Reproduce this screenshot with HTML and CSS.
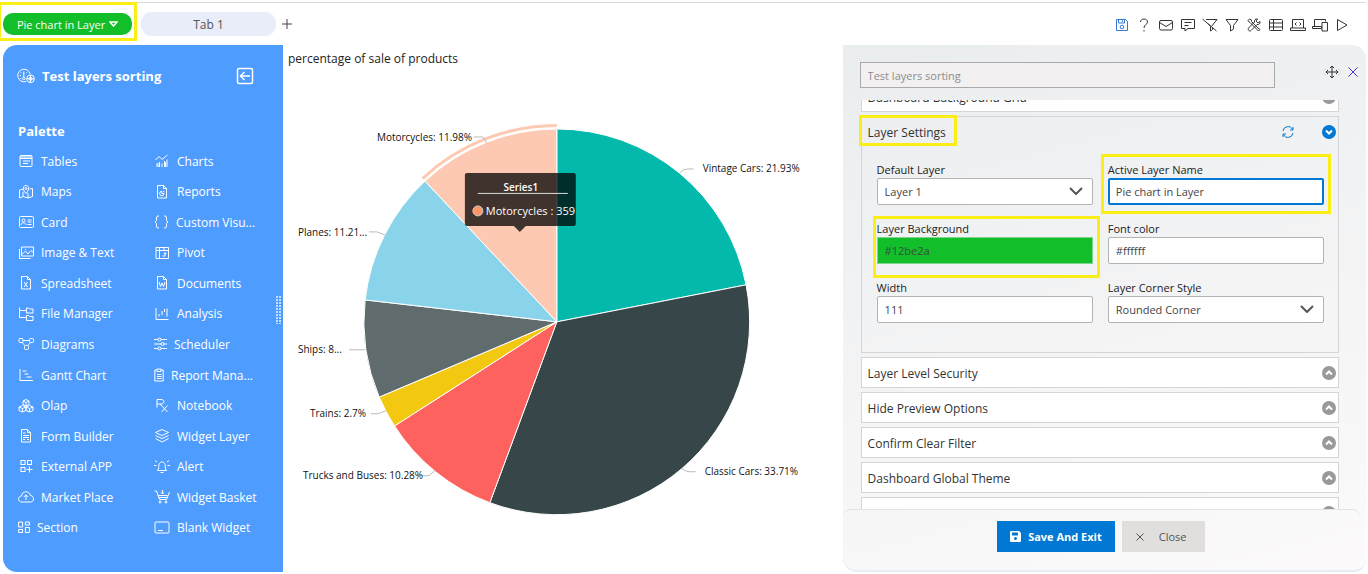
FILE: index.html
```html
<!DOCTYPE html>
<html lang="en">
<head>
<meta charset="utf-8">
<title>Test layers sorting</title>
<link rel="stylesheet" href="styles.css">
</head>
<body>
<header class="topbar">
  <nav class="tabs">
    <div class="tab-wrap">
      <button class="tab tab-active">Pie chart in Layer
        <svg width="9" height="6" viewBox="0 0 9 6"><path d="M1 1h7L4.500 5z"/></svg>
      </button>
      <span class="mark mark-tab"></span>
    </div>
    <button class="tab tab-plain">Tab 1</button>
    <button class="tab-add" aria-label="Add tab"><svg width="12" height="12" viewBox="0 0 12 12"><path d="M6 1v10M1 6h10"/></svg></button>
  </nav>
  <div class="tools">
    <button class="tool tool-save" aria-label="Save"><svg viewBox="0 0 16 16"><path d="M2.500 2.500h9l2 2v9h-11zM4.500 2.500v3.500h6v-3.500M8.500 3.500v1.500"/><circle cx="8" cy="10" r="1.800"/></svg></button>
    <button class="tool" aria-label="Help"><svg viewBox="0 0 16 16"><path d="M4.500 5c0-4 7-4 7 0 0 2.500-3.500 2.500-3.500 6M8 13v1.500"/></svg></button>
    <button class="tool" aria-label="Mail"><svg viewBox="0 0 16 16"><rect x="1.500" y="3.500" width="13" height="9.500" rx="1.500"/><path d="M1.500 5.500 8 9.500l6.500-4"/></svg></button>
    <button class="tool" aria-label="Comment"><svg viewBox="0 0 16 16"><path d="M1.500 2.500h13v9H8l-3 2.500v-2.500H1.500zM4.500 5.500h7M4.500 8.500h4"/></svg></button>
    <button class="tool" aria-label="Clear filter"><svg viewBox="0 0 16 16"><path d="M4 2.500h11L9.800 9M.500 2l14 12M6 6.500l2.500 3v4.500l2-1.500v-2"/></svg></button>
    <button class="tool" aria-label="Filter"><svg viewBox="0 0 16 16"><path d="M2 2.500h12L9.500 8.500V12L6.500 14V8.500z"/></svg></button>
    <button class="tool" aria-label="Settings"><svg viewBox="0 0 16 16"><path d="M2 3.500 3.500 2l2 1v1.500L12 11l2 1.500-1.500 1.500-2-2-6.500-6.500-1-.500zM14 4.500l-2 1.500-2-2 1.500-2c-2-.500-3.500 1-3 3L2.500 11c-1 2 1 4 2.500 2.500L11 7.500c2 .500 3.500-1 3-3z"/></svg></button>
    <button class="tool" aria-label="Grid"><svg viewBox="0 0 16 16"><rect x="1.500" y="2.500" width="13" height="11" rx="1"/><path d="M1.500 6h13M1.500 10h13M5.500 2.500v11"/></svg></button>
    <button class="tool" aria-label="Code"><svg viewBox="0 0 16 16"><path d="M2.500 11v-8.500h11V11M.500 11h15v2.500H.500zM6.500 5.500l-1.500 1.500 1.500 1.500M9.500 5.500 11 7l-1.500 1.500"/></svg></button>
    <button class="tool" aria-label="Devices"><svg viewBox="0 0 16 16"><path d="M2.500 9V2.500h11v2M.500 9.500h9v2h-9zM10 5.500h5.500v8.500H10z"/></svg></button>
    <button class="tool" aria-label="Run"><svg viewBox="0 0 16 16"><path d="M3.500 2.500 13 8l-9.500 5.500z"/></svg></button>
  </div>
</header>

<main class="workspace">
  <aside class="sidebar">
    <div class="side-head">
      <svg width="18" height="16" viewBox="0 0 18 16"><path d="M9 13.500A6.300 6.300 0 1 1 13.200 6M6.800 3.500v6M2.800 7.500h1.200M3.800 4.300l.9.900M9.900 4.300l-.9.900M3.500 10.500h1"/><circle cx="6.800" cy="10.500" r="1.200"/><circle cx="13.500" cy="10.800" r="3.800"/><circle cx="13.500" cy="10.800" r="1.500"/><path d="M13.500 7v7.500M9.700 10.800h7.600"/></svg>
      <h1>Test layers sorting</h1>
      <button class="collapse" aria-label="Collapse palette"><svg width="18" height="18" viewBox="0 0 18 18"><rect x="1.500" y="1.500" width="15" height="15" rx="1.500"/><path d="M14 9H4.500M8.500 5l-4 4 4 4"/></svg></button>
    </div>
    <h2>Palette</h2>
    <div class="palette">
      <button class="item"><svg width="16" height="16" viewBox="0 0 16 16"><rect x="2" y="2.500" width="12" height="11" rx="1"/><path d="M2 5.500h12M2 4h12M5 8h7M5 10.500h5"/></svg>Tables</button>
      <button class="item"><svg width="16" height="16" viewBox="0 0 16 16"><path d="M1.500 7 5 3.500l3 3L13.500 2M3 14v-3.500M5.500 14V9M8 14v-3.500M10.500 14V8M13 14V6.500M4 14v-4M11.500 14V9"/></svg>Charts</button>
      <button class="item"><svg width="16" height="16" viewBox="0 0 16 16"><path d="M5 5 1.500 6v8L5 12.500l5 1.500 4.500-1.500v-8L11.500 5M5 7.500v5M10 9v5M8 9.500C3.500 4.500 5.500 1.500 8 1.500s4.500 3 0 8z"/><circle cx="8" cy="4.500" r="1"/></svg>Maps</button>
      <button class="item"><svg width="16" height="16" viewBox="0 0 16 16"><path d="M3.500 1.500h6l3 3v9.500h-9zM9.500 1.500v3h3M10 9.500a2.200 2.200 0 1 1-2.200-2.200v2.200zM9 7l1.500 1"/></svg>Reports</button>
      <button class="item"><svg width="16" height="16" viewBox="0 0 16 16"><rect x="1.500" y="2.500" width="14" height="11" rx="1"/><circle cx="5.500" cy="6.500" r="1.500"/><path d="M3 11c0-3 5-3 5 0M9.500 6h4M9.500 8h4M9.500 10.500h4"/></svg>Card</button>
      <button class="item"><svg width="15" height="16" viewBox="0 0 15 16"><path d="M5 2H4Q2.500 2 2.500 4v2.500L1 8l1.500 1.500V12Q2.500 14 4 14h1M10 2h1q1.500 0 1.500 2v2.500L14 8l-1.500 1.500V12q0 2-1.500 2h-1"/></svg>Custom Visu...</button>
      <button class="item"><svg width="16" height="16" viewBox="0 0 16 16"><path d="M1.500 4v9.500h11M3.500 2h12v9h-12zM4 9.500 7.500 6l2.500 3 3-3.500 2.500 2M7 4.500h1"/></svg>Image &amp; Text</button>
      <button class="item"><svg width="16" height="16" viewBox="0 0 16 16"><path d="M2 2.500h12.500v11H2zM2 5.500h12.500M5.500 2.500v11M10 2.500v3M8.500 11h2.500V8M10 9l1-1.500L12.500 9"/></svg>Pivot</button>
      <button class="item"><svg width="16" height="16" viewBox="0 0 16 16"><path d="M3.500 1.500h6l3 3v9.500h-9zM9.500 1.500v3h3M6 7l3.500 5M9.500 7 6 12"/></svg>Spreadsheet</button>
      <button class="item"><svg width="16" height="16" viewBox="0 0 16 16"><path d="M3.500 1.500h6l3 3v9.500h-9zM9.500 1.500v3h3M5 7l1.500 4.500L8 8l1.500 3.500L11 7"/></svg>Documents</button>
      <button class="item"><svg width="16" height="16" viewBox="0 0 16 16"><path d="M1.500 1.500v10h6.500M1.500 4.500h6.500M8.500 2h2l1 1h3.500v4H8.500zM8.500 9.500h2l1 1h3.500v4H8.500z"/></svg>File Manager</button>
      <button class="item"><svg width="16" height="16" viewBox="0 0 16 16"><path d="M2 2v11.500h12.500M5 10.500V8M8 9V5M10.500 6V3M13 10.500V2.500"/></svg>Analysis</button>
      <button class="item"><svg width="16" height="16" viewBox="0 0 16 16"><rect x="1" y="2.500" width="4" height="4" rx="1"/><rect x="11.500" y="2.500" width="4" height="4" rx="1"/><rect x="6.500" y="9.500" width="4" height="4" rx="1"/><path d="M5 4.500h6.500M4 6.500l3 3M12.500 6.500l-2.500 3"/></svg>Diagrams</button>
      <button class="item"><svg width="13" height="16" viewBox="0 0 13 16"><path d="M0 3.500h4M7 3.500h6M0 8h7M10 8h3M0 12.500h4M7 12.500h6"/><circle cx="5.500" cy="3.500" r="1.500"/><circle cx="8.500" cy="8" r="1.500"/><circle cx="5.500" cy="12.500" r="1.500"/></svg>Scheduler</button>
      <button class="item"><svg width="16" height="16" viewBox="0 0 16 16"><path d="M2 2v11.500h13M4.500 4h4M6.500 7h4M8.500 10h5"/></svg>Gantt Chart</button>
      <button class="item"><svg width="10" height="16" viewBox="0 0 10 16"><path d="M3 3H.800v11h8.400V3H7M3 2h4v2.500H3zM3 7.500h4.500M3 9.500h4.500M3 11.500h4.500"/></svg>Report Mana...</button>
      <button class="item"><svg width="16" height="16" viewBox="0 0 16 16"><path d="M8 1.500 11 3v3.500L8 8 5 6.500V3zM4.500 7.500 8 9v3.500L4.500 14 1 12.500V9zM11.500 7.500 15 9v3.500L11.500 14 8 12.500V9zM5 3l3 1.500L11 3M8 4.500V8M1 9l3.500 1.500L8 9l3.500 1.500L15 9M4.500 10.500V14M11.500 10.500V14"/></svg>Olap</button>
      <button class="item"><svg width="16" height="16" viewBox="0 0 16 16"><path d="M3 9.500V1.500h4c4 0 4 4.500 0 4.500H3M6 6l7.500 8M13.500 7.500 7.500 14"/></svg>Notebook</button>
      <button class="item"><svg width="16" height="16" viewBox="0 0 16 16"><path d="M3.500 1.500h6l3 3v9.500h-9zM9.500 1.500v3h3M5 5h2.500M5 7.500h6M5 9.500h6M5 11.500h2M9 11.500h2"/></svg>Form Builder</button>
      <button class="item"><svg width="16" height="16" viewBox="0 0 16 16"><path d="M8 1.500 14.500 4.500 8 7.500 1.500 4.500zM1.500 7.500 8 10.500l6.500-3M1.500 10.500 8 14l6.500-3.500"/></svg>Widget Layer</button>
      <button class="item"><svg width="16" height="16" viewBox="0 0 16 16"><rect x="3" y="1.500" width="4" height="4"/><rect x="9.500" y="1.500" width="4" height="4"/><rect x="3" y="8.500" width="4" height="4"/><path d="M11.500 7.500v6M8.500 10.500h6"/></svg>External APP</button>
      <button class="item"><svg width="16" height="16" viewBox="0 0 16 16"><path d="M3.500 11.500C5 9.500 4.500 8 5 5.500c1-3.500 5-3.500 6 0 .5 2.500 0 4 1.500 6zM6.500 13.500h3M0 6.500h2.500M1 1.500l2 1.500M16 6.500h-2.500M15 1.500l-2 1.500"/></svg>Alert</button>
      <button class="item"><svg width="16" height="16" viewBox="0 0 16 16"><path d="M4 13C-.500 13-.500 7.500 3.500 7 4 1.500 11.500 1.500 12.500 6.500 16.500 7 16.500 13 12.500 13zM8 11V6M5.800 8 8 5.800 10.200 8"/></svg>Market Place</button>
      <button class="item"><svg width="16" height="16" viewBox="0 0 16 16"><path d="M.500 2H2.500l3 8.500h7L15.500 3M4 6.500h9.500M5 8.500h8M8.500 1v4M7 3.500 8.500 5 10 3.500"/><circle cx="6" cy="13" r="1"/><circle cx="12" cy="13" r="1"/></svg>Widget Basket</button>
      <button class="item"><svg width="12" height="16" viewBox="0 0 12 16"><path d="M.600 2h4v5h-4zM7.400 2h4v3h-4zM.600 9.500h4v3h-4zM7.400 7.500h4v5h-4z"/></svg>Section</button>
      <button class="item"><svg width="16" height="16" viewBox="0 0 16 16"><rect x="1" y="2" width="14" height="11" rx="1"/><path d="M4 10.500h5"/></svg>Blank Widget</button>
    </div>
    <span class="grip"></span>
  </aside>

  <section class="stage">
    <h3>percentage of sale of products</h3>
    <svg class="chart" viewBox="0 0 560 490" role="img" aria-label="percentage of sale of products">
      <g class="slices">
        <path fill="#02b9ab" d="M274 240V47A193 193 0 0 1 463.400 203z"/>
        <path fill="#374649" d="M274 240 463.400 203A193 193 0 0 1 207 421z"/>
        <path fill="#fd625e" d="M274 240 207 421A193 193 0 0 1 111.600 344.200z"/>
        <path fill="#f2c811" d="M274 240 111.600 344.200A193 193 0 0 1 96.300 315.300z"/>
        <path fill="#5f6b6d" d="M274 240 96.300 315.300A193 193 0 0 1 82.200 218.100z"/>
        <path fill="#8ad4eb" d="M274 240 82.200 218.100A193 193 0 0 1 142.100 99.100z"/>
        <path fill="#fec9b3" d="M274 240 142.100 99.100A193 193 0 0 1 274 47z"/>
      </g>
      <path class="halo" d="M139.700 96.600A196.500 196.500 0 0 1 274 43.500"/>
      <path class="leads" d="M397 91q3-4 8-4h6M399 387q4 3 8 3h6M191 55h9l4 6M86 150h8l8 3M66 268h16M88 332h7l8-3M138 394h8l6-5"/>
      <g class="labels">
        <text x="420" y="90">Vintage Cars: 21.93%</text>
        <text x="422" y="393">Classic Cars: 33.71%</text>
        <text x="94" y="59">Motorcycles: 11.98%</text>
        <text x="15" y="154">Planes: 11.21...</text>
        <text x="15" y="271">Ships: 8...</text>
        <text x="27" y="335">Trains: 2.7%</text>
        <text x="20" y="397">Trucks and Buses: 10.28%</text>
      </g>
      <g class="tip">
        <path class="tip-box" d="M184 91h107q2 0 2 2v49q0 2-2 2H243l-6 6-6-6H184q-2 0-2-2V93q0-2 2-2z"/>
        <path class="tip-line" d="M195 111.500h90"/>
        <text class="tip-title" x="238" y="109">Series1</text>
        <circle cx="195" cy="129" r="5"/>
        <text x="203" y="133">Motorcycles : 359</text>
      </g>
    </svg>
  </section>

  <section class="panel">
    <div class="panel-head">
      <input class="title-input" type="text" aria-label="Dashboard name" value="Test layers sorting">
      <div class="panel-actions">
        <button aria-label="Move"><svg class="move" width="14" height="14" viewBox="0 0 14 14"><path d="M7 1v12M1 7h12M5 3l2-2 2 2M5 11l2 2 2-2M3 5 1 7l2 2M11 5l2 2-2 2"/></svg></button>
        <button aria-label="Close panel"><svg class="close" width="10" height="10" viewBox="0 0 10 10"><path d="M.500.500l9 9M9.500.500l-9 9"/></svg></button>
      </div>
    </div>
    <div class="list">
      <button class="bar">Dashboard Background Grid<svg class="dot" width="14" height="14" viewBox="0 0 14 14"><circle cx="7" cy="7" r="7"/><path d="M4 8.500 7 5.500l3 3"/></svg></button>
      <div class="group">
        <div class="group-head">
          <span class="group-title">Layer Settings<span class="mark mark-title"></span></span>
          <button class="refresh" aria-label="Refresh"><svg width="12" height="12" viewBox="0 0 12 12"><path d="M1 5a5 5 0 0 1 9.500-1.500M11 7a5 5 0 0 1-9.500 1.500M11 1v3H8M1 11V8h3"/></svg></button>
          <button class="toggle" aria-label="Collapse section"><svg class="dot dot-open" width="14" height="14" viewBox="0 0 14 14"><circle cx="7" cy="7" r="7"/><path d="M4 5.500l3 3 3-3"/></svg></button>
        </div>
        <div class="fields">
          <div class="field"><label for="dl">Default Layer</label><div class="pick"><select id="dl"><option>Layer 1</option></select><svg width="14" height="8" viewBox="0 0 14 8"><path d="M1 1l6 6 6-6"/></svg></div></div>
          <div class="field"><label for="al">Active Layer Name</label><input class="focus" id="al" type="text" value="Pie chart in Layer"><span class="mark mark-name"></span></div>
          <div class="field"><label for="lb">Layer Background</label><input class="green" id="lb" type="text" value="#12be2a"><span class="mark mark-back"></span></div>
          <div class="field"><label for="fc">Font color</label><input id="fc" type="text" value="#ffffff"></div>
          <div class="field"><label for="wd">Width</label><input id="wd" type="text" value="111"></div>
          <div class="field"><label for="cs">Layer Corner Style</label><div class="pick"><select id="cs"><option>Rounded Corner</option></select><svg width="14" height="8" viewBox="0 0 14 8"><path d="M1 1l6 6 6-6"/></svg></div></div>
        </div>
      </div>
      <button class="bar">Layer Level Security<svg class="dot" width="14" height="14" viewBox="0 0 14 14"><circle cx="7" cy="7" r="7"/><path d="M4 8.500 7 5.500l3 3"/></svg></button>
      <button class="bar">Hide Preview Options<svg class="dot" width="14" height="14" viewBox="0 0 14 14"><circle cx="7" cy="7" r="7"/><path d="M4 8.500 7 5.500l3 3"/></svg></button>
      <button class="bar">Confirm Clear Filter<svg class="dot" width="14" height="14" viewBox="0 0 14 14"><circle cx="7" cy="7" r="7"/><path d="M4 8.500 7 5.500l3 3"/></svg></button>
      <button class="bar">Dashboard Global Theme<svg class="dot" width="14" height="14" viewBox="0 0 14 14"><circle cx="7" cy="7" r="7"/><path d="M4 8.500 7 5.500l3 3"/></svg></button>
      <button class="bar" aria-label="More settings"><svg class="dot" width="14" height="14" viewBox="0 0 14 14"><circle cx="7" cy="7" r="7"/><path d="M4 8.500 7 5.500l3 3"/></svg></button>
    </div>
    <footer class="panel-foot">
      <button class="btn btn-save"><svg width="11" height="11" viewBox="0 0 11 11"><path fill="#fff" stroke="none" fill-rule="evenodd" d="M1 0h8l2 2v8q0 1-1 1H1q-1 0-1-1V1q0-1 1-1zM2 1.500v3h6v-3zM5.500 6a1.500 1.500 0 1 0 .01 0z"/></svg>Save And Exit</button>
      <button class="btn btn-close"><svg width="8" height="8" viewBox="0 0 8 8"><path d="M.500.500l7 7M7.500.500l-7 7"/></svg>Close</button>
    </footer>
  </section>
</main>
</body>
</html>
```
FILE: styles.css
```css
* { box-sizing: border-box; }

body {
  margin: 0;
  height: 100vh;
  padding: 2px 2px 2px 3px;
  display: flex;
  flex-direction: column;
  background: #fff;
  font-family: "Open Sans", "Noto Sans", sans-serif;
  font-size: 12px;
  color: #222;
  overflow: hidden;
}

button {
  border: 0;
  padding: 0;
  background: none;
  font: inherit;
  color: inherit;
}

svg { flex: none; fill: none; stroke: currentColor; }
h1, h2, h3 { margin: 0; }

.mark {
  position: absolute;
  border: 3px solid #fbee17;
  pointer-events: none;
}

.topbar {
  flex: none;
  height: 43px;
  display: flex;
  justify-content: space-between;
  border-top: 1px solid #d9d9dc;
}

.tabs { display: flex; align-items: center; height: 42px; gap: 9px; }
.tab-wrap { position: relative; }
.tab { display: flex; align-items: center; justify-content: center; }
.tab-active {
  width: 129px;
  height: 22px;
  gap: 4px;
  border-radius: 10px;
  background: #12be2a;
  color: #fff;
  font-size: 11px;
}
.tab-active svg { stroke-width: 1.5; }
.mark-tab { top: -11px; right: -5px; bottom: -6px; left: -5px; }
.tab-plain {
  width: 135px;
  height: 24px;
  border-radius: 11px;
  background: #e9edf9;
  color: #555;
}
.tab-add { display: flex; margin-left: -4px; color: #444; }

.tools { display: flex; align-items: center; height: 44px; gap: 6px; padding-right: 16px; }
.tool { display: flex; color: #333; }
.tool svg { width: 16px; height: 16px; }
.tool-save { color: #3478d4; }

.workspace { flex: 1; min-height: 0; display: flex; }

.sidebar {
  flex: none;
  position: relative;
  width: 280px;
  display: flex;
  flex-direction: column;
  padding: 0 0 29px 14px;
  background: #4f9cff;
  border-radius: 14px 0 0 14px;
  color: #fff;
  font-size: 13px;
}
.side-head { display: flex; align-items: center; gap: 7px; height: 62px; }
.side-head h1 { font-size: 13px; font-weight: 700; }
.collapse { display: flex; margin-left: auto; margin-right: 29px; }
.collapse svg { stroke-width: 1.5; }
.sidebar h2 {
  height: 39px;
  padding: 14px 0 0 1px;
  font-size: 13px;
  font-weight: 700;
  line-height: 20px;
}
.palette {
  flex: 1;
  display: grid;
  grid-template-columns: 136px 1fr;
  grid-auto-rows: 1fr;
}
.item { display: flex; align-items: center; gap: 7px; padding-left: 1px; font-size: 12px; white-space: nowrap; }
.grip {
  position: absolute;
  right: 1px;
  top: 251px;
  width: 6px;
  height: 28px;
  background: radial-gradient(circle at 1px 1px, #c4deff 1px, transparent 1px) 0 0 / 3px 3px;
}

.stage { flex: 1; min-width: 0; padding-top: 5px; display: flex; flex-direction: column; }
.stage h3 { height: 33px; padding-left: 5px; font-size: 12px; font-weight: 400; line-height: 18px; }
.chart { width: 100%; font-family: "Open Sans", "Noto Sans", sans-serif; }
.slices { stroke: #fff; stroke-width: 1; }
.halo { stroke: #fec9b3; stroke-width: 3; }
.leads { stroke: #bbb; }
.labels { fill: #111; stroke: none; font-size: 10px; }
.tip-box { fill: #000; fill-opacity: 0.75; stroke: none; }
.tip-line { stroke: #ddd; }
.tip text { fill: #fff; stroke: none; font-size: 11px; }
.tip .tip-title { text-anchor: middle; font-size: 10px; font-weight: 600; }
.tip circle { fill: #fe9666; stroke: #ccc; }

.panel {
  flex: none;
  width: 38.4%;
  display: flex;
  flex-direction: column;
  border-radius: 0 14px 12px 14px;
  border-bottom: 2px solid #e8ebf8;
  background: linear-gradient(165deg, #eaedee, #fcfafb);
}
.panel-head {
  display: flex;
  justify-content: space-between;
  height: 55px;
  padding: 17px 8px 12px 17px;
}
.title-input {
  width: 415px;
  height: 26px;
  padding: 0 7px;
  border: 1px solid #a9a9a9;
  background: #f2f0f0;
  color: #8c8c8c;
  font: inherit;
  font-size: 11px;
}
.panel-actions { display: flex; align-items: center; gap: 9px; height: 20px; }
.panel-actions button { display: flex; }
.move { color: #333; }
.close { color: #3b35c8; }

.list {
  flex: 1;
  min-height: 0;
  overflow: hidden;
  display: flex;
  flex-direction: column;
  gap: 4px;
  padding: 0 27px 0 18px;
}
.bar {
  flex: none;
  display: flex;
  align-items: center;
  height: 31px;
  padding: 1px 2px 0 6px;
  border: 1px solid #d5d5d7;
  background: #fff;
  font-weight: 500;
  color: #333;
}
.bar:first-child { margin-top: -19px; }
.dot { margin-left: auto; }
.dot circle { fill: #999; stroke: none; }
.dot path { stroke: #fff; stroke-width: 2; }
.dot-open circle { fill: #0078d4; }

.group { flex: none; border: 1px solid #d5d5d7; padding: 0 14px 29px 15px; }
.group-head {
  display: flex;
  align-items: center;
  height: 30px;
  margin: 0 -12px 15px -9px;
}
.group-title { position: relative; font-weight: 500; color: #333; }
.mark-title { top: -9px; right: -11px; bottom: -5px; left: -9px; }
.refresh { display: flex; margin-left: auto; color: #0078d4; }
.toggle { display: flex; margin-left: 28px; }

.fields { display: grid; grid-template-columns: 1fr 1fr; gap: 16px 15px; font-size: 11px; }
.field { position: relative; }
.field label { display: block; line-height: 16px; }
.field input, .field select {
  display: block;
  width: 100%;
  height: 27px;
  padding: 0 7px;
  border: 1px solid #b3b3b3;
  border-radius: 2px;
  background: #fff;
  color: #444;
  font: inherit;
}
.field select { appearance: none; }
.field .focus { border: 2px solid #0078d4; padding: 0 6px; }
.field .green { background: #12be2a; border-color: #7fd48c; border-radius: 0; color: #34503a; }
.pick { position: relative; }
.pick svg { position: absolute; right: 10px; top: 9px; color: #555; stroke-width: 2; }
.mark-name { top: -8px; right: -7px; bottom: -9px; left: -7px; }
.mark-back { top: -5px; right: -7px; bottom: -14px; left: -4px; }

.panel-foot {
  flex: none;
  display: flex;
  justify-content: center;
  gap: 7px;
  height: 61px;
  margin-right: 6px;
  padding-top: 11px;
  border-top: 1px solid #e3e3e5;
  border-radius: 8px;
}
.btn { display: flex; align-items: center; height: 31px; }
.btn-save { gap: 7px; padding: 0 13px; background: #0078d4; color: #fff; font-size: 11px; font-weight: 700; }
.btn-close { gap: 15px; padding: 0 19px 0 14px; background: #e0dfde; color: #555; font-size: 11px; }
```
